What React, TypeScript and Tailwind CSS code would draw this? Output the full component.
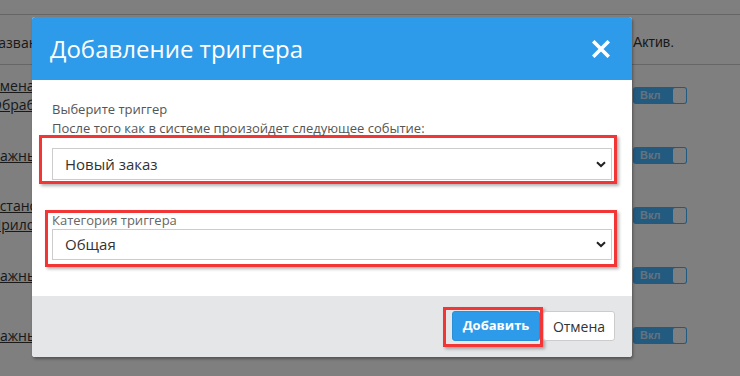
import React from 'react';

const rows = [
  { lines: ['Смена статуса заказа', 'Обработка заказа'] },
  { lines: ['Важные события'] },
  { lines: ['Установка приложения', 'Приложение активно'] },
  { lines: ['Важные события'] },
  { lines: ['Важные события'] },
];

const Toggle: React.FC = () => (
  <div className="flex h-[17px] w-[54px] items-center justify-between rounded-[3px] bg-[#46b4fe] pl-[7px] pr-[1px]">
    <span className="font-['Liberation_Sans',sans-serif] text-[11px] font-bold leading-none text-white/70">Вкл</span>
    <span className="h-[15px] w-[13px] rounded-[2px] bg-white" />
  </div>
);

const Chevron: React.FC = () => (
  <svg width="10" height="7" viewBox="0 0 10 7" className="shrink-0">
    <path d="M1 1.2 L5 5 L9 1.2" fill="none" stroke="#222" strokeWidth="2" />
  </svg>
);

const Select: React.FC<{ value: string; h: string }> = ({ value, h }) => (
  <div className={`flex ${h} w-[560px] items-center justify-between border border-[#cccccc] bg-white pl-[12px] pr-[5px]`}>
    <span className="text-[15px] text-[#333]">{value}</span>
    <Chevron />
  </div>
);

export default function App() {
  return (
    <div className="relative h-[376px] w-[740px] overflow-hidden bg-white font-['Open_Sans',sans-serif]">
      {/* page behind the dialog */}
      <div className="pt-[14px]">
        <div className="flex h-[51px] items-center border-y border-[#cccccc] pt-[5px]">
          <div className="ml-[-12px] flex-1 text-[14px] text-[#333]">Название</div>
          <div className="w-[107px] font-['Liberation_Sans',sans-serif] text-[14px] text-[#333]">Актив.</div>
        </div>
        {rows.map((r, i) => (
          <div key={i} className="flex h-[60px] items-center">
            <div className="ml-[-9px] flex-1 text-[14px] leading-[19px] text-[#333]">
              {r.lines.map((l, j) => (
                <div key={j} className="underline">{l}</div>
              ))}
            </div>
            <div className="w-[107px]">
              <Toggle />
            </div>
          </div>
        ))}
      </div>

      {/* overlay + dialog */}
      <div className="absolute inset-0 bg-black/50 pl-[32px] pt-[17px]">
        <div className="w-[600px] overflow-hidden rounded-[3px] bg-white shadow-[1px_2px_3px_rgba(0,0,0,0.35)]">
          <div className="flex h-[63px] items-center justify-between bg-[#2d9be9] pl-[18px] pr-[22px]">
            <h2 className="text-[24px] leading-none text-white">Добавление триггера</h2>
            <svg width="18" height="18" viewBox="0 0 18 18">
              <path d="M2.5 2.5 L15.5 15.5 M15.5 2.5 L2.5 15.5" stroke="white" strokeWidth="3.6" strokeLinecap="square" />
            </svg>
          </div>

          <div className="h-[216px] pt-[20px]">
            <div className="pl-[20px] text-[13px] leading-[19px] text-[#555]">
              <div>Выберите триггер</div>
              <div>После того как в системе произойдет следующее событие:</div>
            </div>
            <div className="ml-[7px] mt-[-3px] w-[578px] border-[3px] border-[#f23535] pb-[1px] pl-[10px] pr-[2px] pt-[10px] shadow-[2px_2px_3px_rgba(0,0,0,0.3)]">
              <Select value="Новый заказ" h="h-[32px]" />
            </div>
            <div className="ml-[13px] mt-[26px] w-[572px] border-[3px] border-[#f23535] pb-[4px] pl-[4px] pr-[2px] shadow-[2px_2px_3px_rgba(0,0,0,0.3)]">
              <div className="h-[16px] text-[13px] leading-[15px] text-[#666]">Категория триггера</div>
              <Select value="Общая" h="h-[31px]" />
            </div>
          </div>

          <div className="flex h-[61px] items-start justify-end bg-[#e5e6e8] pr-[17px] pt-[11px]">
            <div className="border-[3px] border-[#f23535] pb-[3px] pl-[6px] pt-[1px] shadow-[2px_2px_3px_rgba(0,0,0,0.3)]">
              <button className="h-[30px] w-[88px] rounded-[3px] border border-[#2a8fd6] bg-[#2d9be9] text-[13px] font-bold text-white">
                Добавить
              </button>
            </div>
            <button className="mt-[4px] h-[30px] w-[72px] rounded-[3px] border border-[#cccccc] bg-white text-[14px] text-[#333]">
              Отмена
            </button>
          </div>
        </div>
      </div>
    </div>
  );
}
